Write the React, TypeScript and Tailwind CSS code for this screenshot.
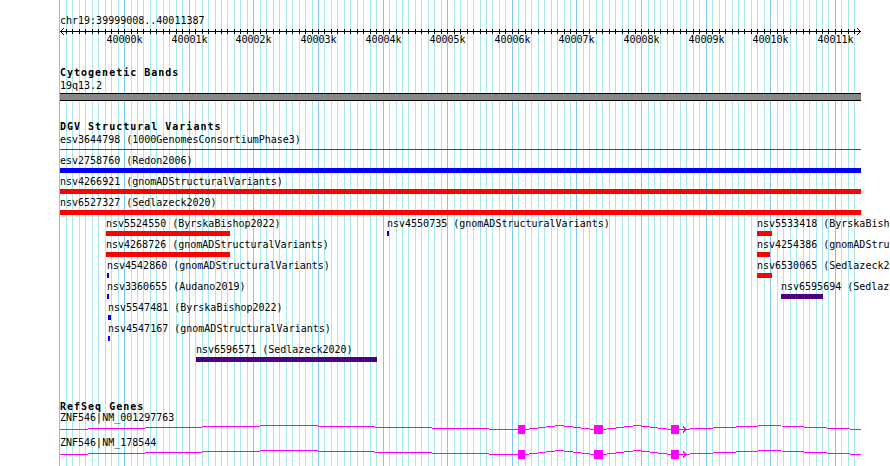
import React from 'react';

// Visible region of the browser view
const VIEW_START = 39999008;
const VIEW_END = 40011387;
const TRACK_W = 800;
const BP_PX = TRACK_W / (VIEW_END - VIEW_START + 1);

const toX = (bp: number) => Math.round((bp - VIEW_START) * BP_PX);
const clampX = (x: number) => Math.min(TRACK_W + 1, Math.max(0, x));

type Variant = {
  name: string;
  source: string;
  start: number;
  end: number;
  color: 'red' | 'blue' | 'purple';
  thin?: boolean;
};

const barColors = {
  red: 'bg-[#ff0000]',
  blue: 'bg-[#0000ff]',
  purple: 'bg-[#4b0082]',
};

const variantRows: Variant[][] = [
  [{ name: 'esv3644798', source: '1000GenomesConsortiumPhase3', start: 39990120, end: 40024410, color: 'red', thin: true }],
  [{ name: 'esv2758760', source: 'Redon2006', start: 39981200, end: 40087500, color: 'blue' }],
  [{ name: 'nsv4266921', source: 'gnomADStructuralVariants', start: 39992300, end: 40015600, color: 'red' }],
  [{ name: 'nsv6527327', source: 'Sedlazeck2020', start: 39994800, end: 40013200, color: 'red' }],
  [
    { name: 'nsv5524550', source: 'ByrskaBishop2022', start: 39999720, end: 40001639, color: 'red' },
    { name: 'nsv4550735', source: 'gnomADStructuralVariants', start: 40004068, end: 40004099, color: 'blue' },
    { name: 'nsv5533418', source: 'ByrskaBishop2022', start: 40009794, end: 40010026, color: 'red' },
  ],
  [
    { name: 'nsv4268726', source: 'gnomADStructuralVariants', start: 39999721, end: 40001640, color: 'red' },
    { name: 'nsv4254386', source: 'gnomADStructuralVariants', start: 40009795, end: 40009995, color: 'red' },
  ],
  [
    { name: 'nsv4542860', source: 'gnomADStructuralVariants', start: 39999735, end: 39999766, color: 'blue' },
    { name: 'nsv6530065', source: 'Sedlazeck2020', start: 40009796, end: 40010027, color: 'red' },
  ],
  [
    { name: 'nsv3360655', source: 'Audano2019', start: 39999736, end: 39999767, color: 'blue' },
    { name: 'nsv6595694', source: 'Sedlazeck2020', start: 40010166, end: 40010815, color: 'purple' },
  ],
  [{ name: 'nsv5547481', source: 'ByrskaBishop2022', start: 39999751, end: 39999797, color: 'blue' }],
  [{ name: 'nsv4547167', source: 'gnomADStructuralVariants', start: 39999752, end: 39999782, color: 'blue' }],
  [{ name: 'nsv6596571', source: 'Sedlazeck2020', start: 40001113, end: 40003914, color: 'purple' }],
];

type Gene = { name: string; start: number; end: number; exons: [number, number][] };

const sharedExons: [number, number][] = [
  [40006096, 40006204],
  [40007272, 40007411],
  [40008463, 40008587],
];

const genes: Gene[] = [
  { name: 'ZNF546|NM_001297763', start: 39981400, end: 40012400, exons: sharedExons },
  { name: 'ZNF546|NM_178544', start: 39981400, end: 40012400, exons: sharedExons },
];

// Background grid: minor line every 100bp, major every 1kb
const GridLines: React.FC = () => {
  const lines: { x: number; major: boolean }[] = [];
  for (let p = 39999000; p <= 40011300; p += 100) {
    lines.push({ x: 60 + toX(p), major: p % 1000 === 0 });
  }
  return (
    <svg className="absolute inset-0" width={890} height={466} shapeRendering="crispEdges">
      {lines.map(l => (
        <rect key={l.x} x={l.x} y={0} width={1} height={466} fill={l.major ? '#80c8ee' : '#aae8ee'} />
      ))}
    </svg>
  );
};

const Ruler: React.FC = () => {
  const ticks: number[] = [];
  for (let p = 39999100; p <= 40011300; p += 100) ticks.push(toX(p));
  const labels: number[] = [];
  for (let k = 40000; k <= 40011; k++) labels.push(k);

  return (
    <div className="relative h-[19px] w-[801px]">
      <svg className="absolute left-0 top-0" width={801} height={9} shapeRendering="crispEdges">
        <rect x={0} y={5} width={801} height={1} fill="#000" />
        {ticks.map(x => (
          <rect key={x} x={x} y={3} width={1} height={5} fill="#000" />
        ))}
        <polyline points="4,2 0.5,5.5 4,9" fill="none" stroke="#000" strokeWidth={1} />
        <polyline points="797,2 800.5,5.5 797,9" fill="none" stroke="#000" strokeWidth={1} />
      </svg>
      {labels.map(k => (
        <span
          key={k}
          className="absolute top-[9px] -translate-x-1/2 whitespace-nowrap"
          style={{ left: toX(k * 1000) + 0.5 }}
        >
          {k}k
        </span>
      ))}
    </div>
  );
};

const VariantRow: React.FC<{ row: Variant[] }> = ({ row }) => (
  <div className="relative h-[21px]">
    {row.map(v => {
      const left = clampX(toX(v.start));
      const right = clampX(toX(v.end));
      return (
        <React.Fragment key={v.name}>
          <span className="absolute top-0 whitespace-nowrap" style={{ left }}>
            {v.name} ({v.source})
          </span>
          <span
            className={`absolute ${v.thin ? 'top-[14px] h-px' : 'top-[12px] h-[5px]'} ${barColors[v.color]}`}
            style={{ left, width: Math.max(2, right - left) }}
          />
        </React.Fragment>
      );
    })}
  </div>
);

const GeneRow: React.FC<{ gene: Gene }> = ({ gene }) => {
  const exons = gene.exons.map(([s, e]) => [toX(s), toX(e)] as [number, number]);
  // intron segments between view edges and exons
  const bounds = [clampX(toX(gene.start)), ...exons.flat(), clampX(toX(gene.end))];
  const introns: [number, number][] = [];
  for (let i = 0; i < bounds.length; i += 2) introns.push([bounds[i], bounds[i + 1]]);
  const lastExonEnd = exons[exons.length - 1][1];

  return (
    <div className="relative h-[25px]">
      <span className="absolute left-0 top-0 whitespace-nowrap">{gene.name}</span>
      <svg className="absolute left-0 top-[12px]" width={801} height={9} shapeRendering="crispEdges">
        {introns.map(([a, b]) => (
          <polyline
            key={a}
            points={`${a},4.5 ${(a + b) / 2},0.5 ${b},4.5`}
            fill="none"
            stroke="#ff00ff"
            strokeWidth={1}
          />
        ))}
        {exons.map(([a, b]) => (
          <rect key={a} x={a} y={0} width={b - a} height={9} fill="#ff00ff" />
        ))}
        {/* strand arrow */}
        <polyline
          points={`${lastExonEnd + 4},1.5 ${lastExonEnd + 7},4.5 ${lastExonEnd + 4},7.5`}
          fill="none"
          stroke="#ff00ff"
          strokeWidth={1}
        />
      </svg>
    </div>
  );
};

const App: React.FC = () => {
  return (
    <div className="relative h-[466px] w-[890px] overflow-hidden bg-white font-['DejaVu_Sans_Mono',monospace] text-[10px] leading-[10px] text-black">
      <GridLines />

      <div className="relative flex flex-col pl-[60px]">
        {/* Location + ruler */}
        <div className="mt-[16px] whitespace-nowrap">chr19:39999008..40011387</div>
        <Ruler />

        {/* Cytogenetic Bands */}
        <div className="mt-[23px] whitespace-nowrap font-bold tracking-[1px]">Cytogenetic Bands</div>
        <div className="mt-[3px]">19q13.2</div>
        <div className="mt-[2px] h-[8px] w-[801px] border-y border-black bg-[#888888]" />

        {/* DGV Structural Variants */}
        <div className="mt-[21px] whitespace-nowrap font-bold tracking-[1px]">DGV Structural Variants</div>
        <div className="mt-[3px] flex flex-col">
          {variantRows.map((row, i) => (
            <VariantRow key={i} row={row} />
          ))}
        </div>

        {/* RefSeq Genes */}
        <div className="mt-[36px] whitespace-nowrap font-bold tracking-[1px]">RefSeq Genes</div>
        <div className="mt-[1px] flex flex-col">
          {genes.map(g => (
            <GeneRow key={g.name} gene={g} />
          ))}
        </div>
      </div>
    </div>
  );
};

export default App;
